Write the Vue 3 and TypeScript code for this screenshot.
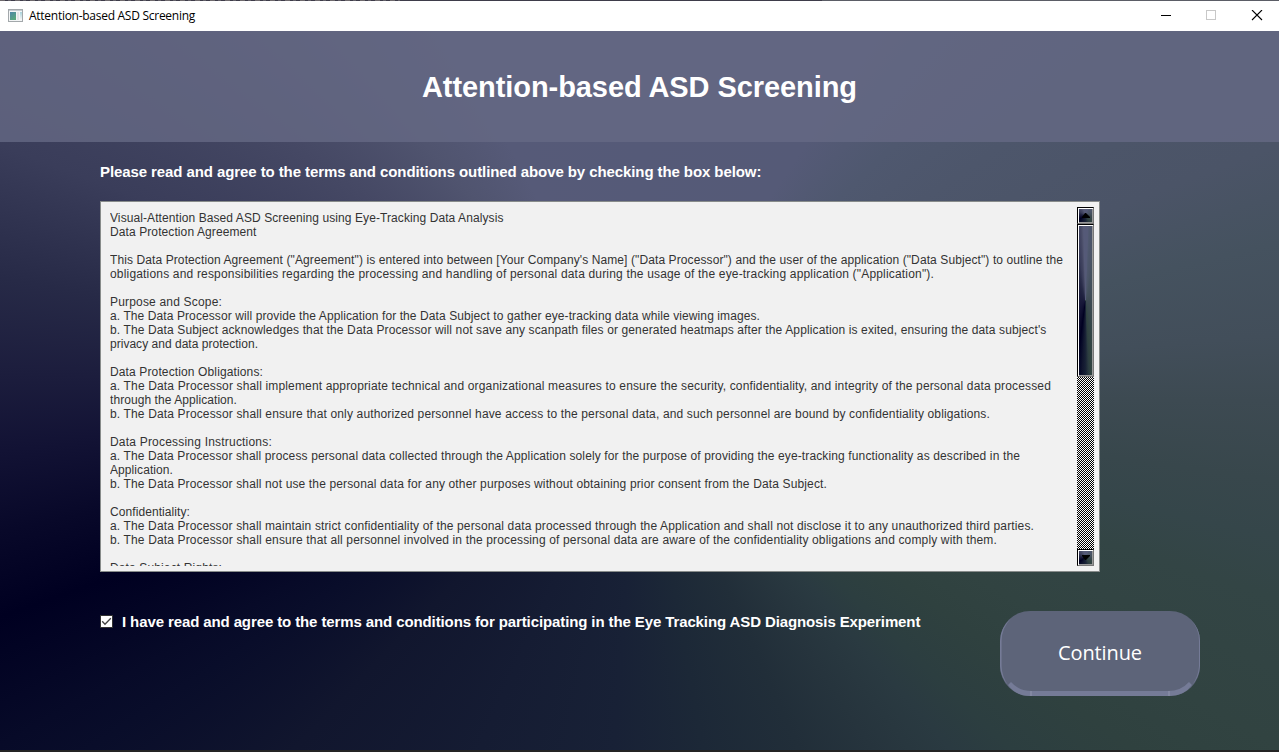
<script setup lang="ts">
interface Line {
  text: string
  width: number
}

const lines: Line[] = [
  { text: 'Visual-Attention Based ASD Screening using Eye-Tracking Data Analysis', width: 393.5 },
  { text: 'Data Protection Agreement', width: 146.5 },
  { text: '', width: 0 },
  { text: 'This Data Protection Agreement ("Agreement") is entered into between [Your Company\'s Name] ("Data Processor") and the user of the application ("Data Subject") to outline the', width: 953 },
  { text: 'obligations and responsibilities regarding the processing and handling of personal data during the usage of the eye-tracking application ("Application").', width: 824 },
  { text: '', width: 0 },
  { text: 'Purpose and Scope:', width: 112 },
  { text: 'a. The Data Processor will provide the Application for the Data Subject to gather eye-tracking data while viewing images.', width: 650 },
  { text: 'b. The Data Subject acknowledges that the Data Processor will not save any scanpath files or generated heatmaps after the Application is exited, ensuring the data subject\'s', width: 936.5 },
  { text: 'privacy and data protection.', width: 148 },
  { text: '', width: 0 },
  { text: 'Data Protection Obligations:', width: 153 },
  { text: 'a. The Data Processor shall implement appropriate technical and organizational measures to ensure the security, confidentiality, and integrity of the personal data processed', width: 941 },
  { text: 'through the Application.', width: 127 },
  { text: 'b. The Data Processor shall ensure that only authorized personnel have access to the personal data, and such personnel are bound by confidentiality obligations.', width: 880 },
  { text: '', width: 0 },
  { text: 'Data Processing Instructions:', width: 162 },
  { text: 'a. The Data Processor shall process personal data collected through the Application solely for the purpose of providing the eye-tracking functionality as described in the', width: 910 },
  { text: 'Application.', width: 63 },
  { text: 'b. The Data Processor shall not use the personal data for any other purposes without obtaining prior consent from the Data Subject.', width: 717 },
  { text: '', width: 0 },
  { text: 'Confidentiality:', width: 80 },
  { text: 'a. The Data Processor shall maintain strict confidentiality of the personal data processed through the Application and shall not disclose it to any unauthorized third parties.', width: 924 },
  { text: 'b. The Data Processor shall ensure that all personnel involved in the processing of personal data are aware of the confidentiality obligations and comply with them.', width: 887 },
  { text: '', width: 0 },
  { text: 'Data Subject Rights:', width: 112 },
]

// Spreads the letters of a single-line label so it occupies the given advance width.
const vFit = {
  mounted(el: HTMLElement, binding: { value: number }) {
    const count = (el.textContent ?? '').length
    if (!count || !binding.value) return
    const natural = el.getBoundingClientRect().width
    el.style.letterSpacing = `${(binding.value - natural) / count}px`
  },
}
</script>

<template>
  <div class="window">
    <div class="top-edge"></div>
    <header class="titlebar">
      <svg class="app-icon" width="16" height="14" viewBox="0 0 16 14">
        <defs>
          <linearGradient id="pane" x1="0" y1="0" x2="0.6" y2="1">
            <stop offset="0" stop-color="#4d86a8" />
            <stop offset="1" stop-color="#58a77c" />
          </linearGradient>
          <linearGradient id="side" x1="0" y1="0" x2="0" y2="1">
            <stop offset="0" stop-color="#a9d3dc" />
            <stop offset="1" stop-color="#eef2f3" />
          </linearGradient>
        </defs>
        <rect x="0.5" y="0.5" width="14" height="12" fill="#f3f5f6" stroke="#a3a8ab" />
        <rect x="1" y="1" width="13" height="1" fill="#c5cbd0" />
        <rect x="2" y="3" width="6" height="8" fill="url(#pane)" />
        <rect x="9" y="3" width="2" height="8" fill="#e2e4e6" />
        <rect x="12" y="3" width="2" height="7" fill="url(#side)" />
      </svg>
      <span v-fit="166" class="caption">Attention-based ASD Screening</span>
      <svg class="controls" width="104" height="12" viewBox="0 0 104 12">
        <rect x="0" y="5" width="10" height="1" fill="#000" />
        <rect x="45.5" y="0.5" width="9" height="9" fill="none" stroke="#c8c8c8" />
        <path d="M91 0L101 10M101 0L91 10" stroke="#000" stroke-width="1.1" />
      </svg>
    </header>

    <main class="body">
      <section class="banner">
        <h1 v-fit="435">Attention-based ASD Screening</h1>
      </section>

      <div class="content">
        <p class="lead"><span v-fit="661.3">Please read and agree to the terms and conditions outlined above by checking the box below:</span></p>

        <div class="terms">
          <div class="text">
            <div v-for="(line, i) in lines" :key="i" class="line"><span v-fit="line.width">{{ line.text }}</span></div>
          </div>
          <div class="scrollbar">
            <div class="arrow">
              <span class="fill"></span>
              <svg width="8" height="5" viewBox="0 0 8 5"><path d="M0 5V4L3 0H4L8 4V5Z" /></svg>
            </div>
            <div class="thumb"><span class="fill"></span></div>
            <div class="track"></div>
            <div class="arrow">
              <span class="fill"></span>
              <svg width="8" height="5" viewBox="0 0 8 5"><path d="M0 0V1L3 5H4L8 1V0Z" /></svg>
            </div>
          </div>
        </div>

        <div class="actions">
          <label class="agree">
            <span class="box">
              <svg width="11" height="11" viewBox="0 0 11 11"><path d="M1.2 5.2L4 8.2L9.8 2.2" fill="none" stroke="#444" stroke-width="1.3" /></svg>
            </span>
            <span v-fit="798.3">I have read and agree to the terms and conditions for participating in the Eye Tracking ASD Diagnosis Experiment</span>
          </label>
          <button class="continue" type="button">
            <svg class="edge" width="200" height="85" viewBox="0 0 200 85">
              <path d="M11 7.5A30 30 0 0 0 0 30V55A30 30 0 0 0 8 74A34 34 0 0 1 1.6 55V30A32 32 0 0 1 11 7.5Z" />
              <path d="M190 8A30 30 0 0 1 200 30V55A30 30 0 0 1 192 74A34 34 0 0 0 199 55V30A30 30 0 0 0 190 8Z" />
              <path d="M8 74L11 71Q19 80 32 80H168Q181 80 189 71L192 74Q184 85 170 85H30Q16 85 8 74Z" />
              <path class="joint" d="M30 80H32V85H30ZM168 80H170V85H168Z" />
            </svg>
            <span v-fit="84">Continue</span>
          </button>
        </div>
      </div>
    </main>
    <div class="bottom-edge"></div>
  </div>
</template>

<style>
html,
body {
  margin: 0;
  overflow: hidden;
}
</style>

<style scoped>
.window {
  --sweep: conic-gradient(
    from 0deg at 50% 50%,
    #555a78 0deg, #555a77 34deg, #4f586f 46deg, #4d566b 56deg, #4b5467 69deg,
    #45525f 77deg, #424e5a 85deg, #3d4a52 91deg, #38474c 98deg, #35464a 103deg,
    #334545 108deg, #314341 119deg, #2f413f 126deg, #2c3e40 134deg, #2a3a41 139deg,
    #26343d 147deg, #212e39 156deg, #1c2837 170deg, #182136 184deg, #151c33 204deg,
    #11162e 224deg, #090d2a 237deg, #070a28 241deg, #000021 250.5deg, #080829 257.5deg,
    #121234 264.6deg, #1c1d3d 271.5deg, #272a47 280deg, #3a3d5a 291deg, #454864 305deg,
    #50546f 319deg, #565a78 332deg, #555a78 360deg
  );
  width: 1279px;
  height: 752px;
  display: flex;
  flex-direction: column;
  font-family: "Liberation Sans", Arial, sans-serif;
}
.top-edge {
  height: 1px;
  flex: none;
  background:
    repeating-linear-gradient(90deg, #6f6a6e 0 5px, #3e3c4a 5px 8px, #625f68 8px 11px, #3e3c4a 11px 15px) 0 0 / 400px 1px no-repeat,
    linear-gradient(90deg, #3e3c4a 0 822px, #5b5d66 822px);
}
.titlebar {
  height: 30px;
  flex: none;
  display: flex;
  align-items: center;
  background: #fff;
  box-sizing: border-box;
  padding: 0 14px 0 8px;
}
.app-icon {
  margin-right: 5px;
}
.caption {
  font: 12px/16px "Open Sans", "Noto Sans", sans-serif;
  color: #000;
  white-space: nowrap;
}
.controls {
  margin-left: auto;
}
.body {
  flex: 1;
  min-height: 0;
  background: var(--sweep);
}
.banner {
  height: 111px;
  display: flex;
  align-items: center;
  justify-content: center;
  background: rgba(101, 105, 132, 0.8);
}
h1 {
  margin: 0;
  font-size: 29px;
  line-height: 34px;
  color: #fff;
  white-space: nowrap;
}
.content {
  padding: 0 79px 0 100px;
}
.lead {
  margin: 0;
  height: 59px;
  line-height: 59px;
  font-size: 15px;
  font-weight: bold;
  color: #fff;
  white-space: nowrap;
}
.terms {
  box-sizing: border-box;
  width: 1000px;
  height: 371px;
  border: 1px solid #888c8b;
  background: #f1f1f1;
  padding: 5px 5px 5px 9px;
  display: flex;
  justify-content: space-between;
}
.text {
  padding-top: 4px;
  overflow: hidden;
  width: 958px;
  font-size: 12px;
  color: #333;
}
.line {
  height: 14px;
  line-height: 14px;
  white-space: nowrap;
}
.scrollbar {
  width: 17px;
  height: 359px;
  display: flex;
  flex-direction: column;
}
.arrow,
.thumb {
  --h: 13;
  position: relative;
  box-sizing: border-box;
  flex: none;
  height: 17px;
  border: 1px solid;
  border-color: #000 #777 #777 #000;
  box-shadow: inset 1px 1px #fff, inset -1px -1px #999;
  display: flex;
  align-items: center;
  justify-content: center;
}
.thumb {
  --h: 149;
  height: 153px;
}
.arrow svg {
  position: relative;
}
.fill {
  position: absolute;
  left: 1px;
  top: 1px;
  width: 1279px;
  height: 720px;
  background: var(--sweep);
  transform-origin: 0 0;
  transform: scale(calc(13 / 1279), calc(var(--h) / 720));
}
.track {
  flex: 1;
  background: repeating-conic-gradient(#000 0 25%, #fff 0 50%) 0 0 / 2px 2px;
}
.actions {
  display: flex;
  justify-content: space-between;
  align-items: flex-start;
  padding-top: 39px;
}
.agree {
  display: flex;
  align-items: center;
  gap: 9px;
  height: 21px;
  font-size: 15px;
  line-height: 17px;
  font-weight: bold;
  color: #fff;
  white-space: nowrap;
}
.box {
  box-sizing: border-box;
  width: 13px;
  height: 13px;
  border: 1px solid #333;
  background: #fff;
  display: flex;
}
.continue {
  position: relative;
  width: 200px;
  height: 85px;
  padding: 0 0 2px;
  border: 0;
  border-radius: 30px;
  background: #5d6479;
  color: #fff;
  font: 20px/28px "Open Sans", "Noto Sans", sans-serif;
}
.edge {
  position: absolute;
  left: 0;
  top: 0;
  fill: #757b97;
}
.joint {
  fill: #8388a2;
}
.bottom-edge {
  height: 2px;
  flex: none;
  background: #242424;
}
</style>
